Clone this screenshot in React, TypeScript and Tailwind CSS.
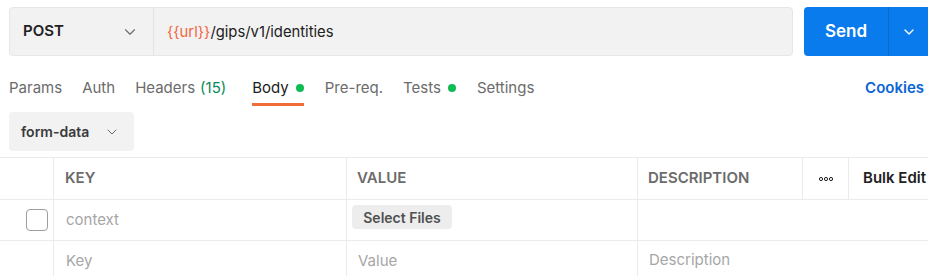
import { ChevronDown } from "lucide-react"

export default function App() {
  const tabs = [
    { name: "Params", ml: "ml-0" },
    { name: "Auth", ml: "ml-[20px]" },
    { name: "Headers", count: "(15)", ml: "ml-[20px]" },
    { name: "Body", dot: true, active: true, ml: "ml-[26px]" },
    { name: "Pre-req.", ml: "ml-[21px]" },
    { name: "Tests", dot: true, ml: "ml-[20px]" },
    { name: "Settings", ml: "ml-[21px]" },
  ]

  return (
    <div
      className="w-[928px] h-[276px] overflow-hidden bg-white text-[#212121]"
      style={{ fontFamily: "Inter, 'Noto Sans', sans-serif" }}
    >
      {/* Request bar */}
      <div className="flex pt-[7px] pl-[9px]">
        <div className="flex h-[49px] w-[784px] rounded-[4px] border border-[#e6e6e6] bg-[#f2f2f2]">
          <div className="flex w-[144px] items-center justify-between border-r border-[#e3e3e3] pl-[13px] pr-[14px]">
            <span className="text-[15px] font-semibold text-[#212121]">POST</span>
            <ChevronDown className="h-[18px] w-[18px] text-[#6b6b6b]" strokeWidth={1.5} />
          </div>
          <div className="flex items-center pl-[13px] pt-[1px] text-[14.8px] text-[#212121]">
            <span className="text-[#f2643d]">{"{{url}}"}</span>
            <span>/gips/v1/identities</span>
          </div>
        </div>
        <div className="ml-[11px] flex h-[49px] flex-1 overflow-hidden rounded-l-[4px] bg-[#097bed] text-white">
          <div className="flex w-[84px] items-center justify-center text-[17px] font-semibold">Send</div>
          <div className="flex flex-1 items-center justify-center border-l border-[#0a6ad0]">
            <ChevronDown className="h-[16px] w-[16px]" strokeWidth={2} />
          </div>
        </div>
      </div>

      {/* Tabs */}
      <div className="mt-[16px] flex h-[34px] items-start justify-between pl-[9px] pr-[4px]">
        <div className="flex">
          {tabs.map((t) => (
            <div
              key={t.name}
              className={`flex h-[34px] items-start border-b-[3px] pt-[5px] text-[15px] ${t.ml} ${
                t.active ? "border-[#f26b3a] text-[#212121]" : "border-transparent text-[#6b6b6b]"
              }`}
            >
              <span>{t.name}</span>
              {t.count && <span className="ml-[5px] text-[#0b8a5a]">{t.count}</span>}
              {t.dot && <span className="ml-[7px] mt-[7px] h-[8px] w-[8px] rounded-full bg-[#0cbb52]" />}
            </div>
          ))}
        </div>
        <span className="pt-[5px] text-[15px] font-semibold text-[#0b65d6]">Cookies</span>
      </div>

      {/* Body type */}
      <div className="mt-[6px] pl-[9px]">
        <div className="flex h-[39px] w-[125px] items-center justify-between rounded-[4px] bg-[#f2f2f2] pl-[12px] pr-[14px]">
          <span className="text-[14px] font-semibold text-[#3a3a3a]">form-data</span>
          <ChevronDown className="h-[16px] w-[16px] text-[#6b6b6b]" strokeWidth={1.5} />
        </div>
      </div>

      {/* Table */}
      <div className="mt-[6px] border-t border-[#ebebeb]">
        <div className="flex h-[42px] border-b border-[#ebebeb] text-[15px] font-semibold text-[#6b6b6b]">
          <div className="w-[54px] border-r border-[#ebebeb]" />
          <div className="flex w-[293px] items-center border-r border-[#ebebeb] pl-[11px]">KEY</div>
          <div className="flex w-[291px] items-center border-r border-[#ebebeb] pl-[10px]">VALUE</div>
          <div className="flex w-[165px] items-center border-r border-[#ebebeb] pl-[10px]">DESCRIPTION</div>
          <div className="flex w-[46px] items-center justify-center border-r border-[#ebebeb]">
            <svg width="14" height="4" viewBox="0 0 14 4" fill="none" stroke="#212121" strokeWidth="1">
              <circle cx="2" cy="2" r="1.6" />
              <circle cx="7" cy="2" r="1.6" />
              <circle cx="12" cy="2" r="1.6" />
            </svg>
          </div>
          <div className="flex flex-1 items-center whitespace-nowrap pl-[14px] text-[#212121]">Bulk Edit</div>
        </div>

        <div className="flex h-[41px] border-b border-[#ebebeb] text-[15px]">
          <div className="flex w-[54px] items-center justify-end border-r border-[#ebebeb] pr-[5px]">
            <div className="h-[22px] w-[22px] rounded-[4px] border border-[#9e9e9e] bg-white" />
          </div>
          <div className="flex w-[293px] items-center border-r border-[#ebebeb] pl-[12px] text-[#a6a6a6]">context</div>
          <div className="flex w-[291px] items-start border-r border-[#ebebeb] pl-[5px] pt-[5px]">
            <div className="flex h-[24px] w-[100px] items-center justify-center rounded-[4px] bg-[#ededed] text-[14px] font-semibold text-[#505050]">
              Select Files
            </div>
          </div>
          <div className="flex-1" />
        </div>

        <div className="flex h-[40px] text-[15px] text-[#a6a6a6]">
          <div className="w-[54px] border-r border-[#ebebeb]" />
          <div className="flex w-[293px] items-center border-r border-[#ebebeb] pl-[12px]">Key</div>
          <div className="flex w-[291px] items-center border-r border-[#ebebeb] pl-[11px]">Value</div>
          <div className="flex flex-1 items-center pl-[11px] pb-[2px]">Description</div>
        </div>
      </div>
    </div>
  )
}
